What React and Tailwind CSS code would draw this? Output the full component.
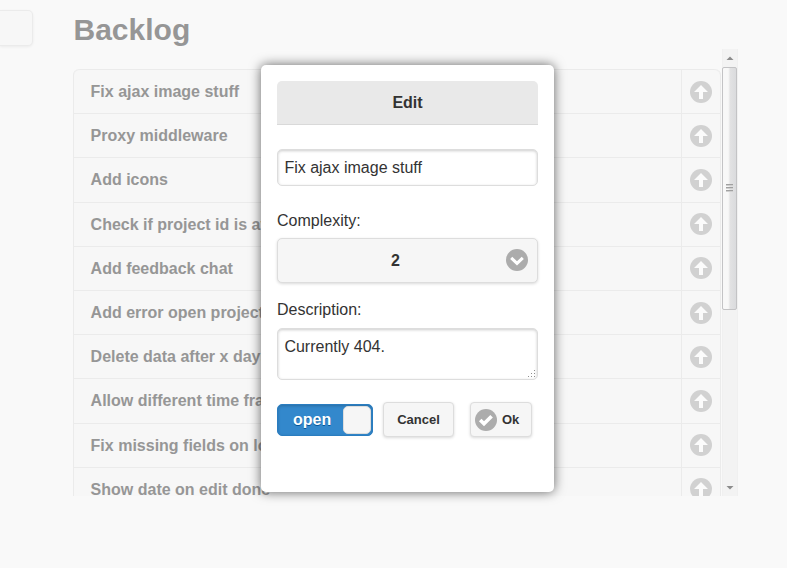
import React from "react";

const items = [
  "Fix ajax image stuff",
  "Proxy middleware",
  "Add icons",
  "Check if project id is available",
  "Add feedback chat",
  "Add error open project",
  "Delete data after x days",
  "Allow different time frames",
  "Fix missing fields on load",
  "Show date on edit done",
];

function UpIcon() {
  return (
    <svg width="22" height="22" viewBox="0 0 22 22" className="block">
      <circle cx="11" cy="11" r="11" fill="#d1d1d1" />
      <path d="M11 4 L18 11 H13 V18 H9 V11 H4 Z" fill="#fbfbfb" />
    </svg>
  );
}

function Row({ label, first }) {
  return (
    <li
      className={
        "flex h-[44.2px] shrink-0 border-t border-[#ebebeb] " +
        (first ? "rounded-t-md" : "")
      }
    >
      <div className="w-[607px] truncate pl-[16.6px] pt-[10px] text-[16px] leading-6 font-bold text-[#969696]">
        {label}
      </div>
      <div className="w-[39px] border-l border-[#ebebeb] pt-[10.6px] pl-[8px]">
        <UpIcon />
      </div>
    </li>
  );
}

function Scrollbar() {
  return (
    <div className="flex h-[447px] w-[16px] flex-col border-x border-[#f0f0f0] bg-[#f3f3f3]">
      <div className="flex h-[18px] items-center justify-center">
        <svg width="8" height="4" viewBox="0 0 8 4">
          <path d="M0.5 4 L4 0.5 L7.5 4 Z" fill="#8c8c8c" />
        </svg>
      </div>
      <div className="-ml-px flex h-[243px] w-[15px] items-center justify-center rounded-[2px] border border-[#c3c3c5] bg-linear-to-r from-[#f8f8f8] from-40% via-[#e2e2e3] via-55% to-[#dadbdd]">
        <svg width="7" height="9" viewBox="0 0 7 9" className="-mt-px -ml-px">
          <path d="M0 0H7V1H0ZM0 3H7V4H0ZM0 6H7V7H0Z" fill="#a0a0a0" />
          <path d="M0 1H7V2H0ZM0 4H7V5H0ZM0 7H7V8H0Z" fill="#cfcfcf" />
        </svg>
      </div>
      <div className="mt-auto flex h-[16px] items-center justify-center">
        <svg width="8" height="4" viewBox="0 0 8 4">
          <path d="M0.5 0 L4 3.5 L7.5 0 Z" fill="#8c8c8c" />
        </svg>
      </div>
    </div>
  );
}

function EditPopup() {
  return (
    <div className="absolute top-[65px] left-[261px] h-[427px] w-[293px] rounded-[5px] bg-white px-4 pt-4 text-[16px] text-[#333] shadow-[0_0_12px_rgba(0,0,0,0.6)]">
      <div className="flex h-[44px] items-center justify-center rounded-t-[5px] border-b border-[#d9d9d9] bg-[#e9e9e9] font-bold">
        Edit
      </div>
      <div className="mt-6 flex h-[37px] items-center rounded-[5px] border border-[#ddd] pl-[6.4px] shadow-[inset_0_1px_3px_rgba(0,0,0,0.2)]">
        Fix ajax image stuff
      </div>
      <div className="mt-[23px] leading-6">Complexity:</div>
      <div className="mt-[5px] flex h-[45px] items-center rounded-[5px] border border-[#ddd] bg-[#f6f6f6] pr-[9px] shadow-[0_1px_3px_rgba(0,0,0,0.15)]">
        <div className="flex-1 pl-[7px] text-center font-bold">2</div>
        <svg width="22" height="22" viewBox="0 0 22 22" className="-mt-px">
          <circle cx="11" cy="11" r="11" fill="#acacac" />
          <path d="M5.2 8.8 L11 14.4 L16.8 8.8" fill="none" stroke="#fff" strokeWidth="3" />
        </svg>
      </div>
      <div className="mt-[15px] leading-6">Description:</div>
      <div className="mt-[6px] flex h-[52px] justify-between rounded-[5px] border border-[#ddd] pt-[7px] pr-[1px] pl-[6.4px] leading-[22px] shadow-[inset_0_1px_3px_rgba(0,0,0,0.2)]">
        <span>Currently 404.</span>
        <svg width="9" height="9" viewBox="0 0 9 9" className="mb-px self-end">
          <path
            d="M7 1h1v1h-1zM4 4h1v1h-1zM7 4h1v1h-1zM1 7h1v1h-1zM4 7h1v1h-1zM7 7h1v1h-1z"
            fill="#8f8f8f"
          />
        </svg>
      </div>
      <div className="mt-[22px] flex items-start">
        <div className="mt-[2px] flex h-[32px] w-[96px] items-center justify-between rounded-[5px] border border-[#2a7dc0] bg-[#3388cc] pr-px pl-[15px] shadow-[inset_0_1px_3px_rgba(0,0,0,0.2)]">
          <span className="leading-6 font-bold text-white [text-shadow:0_1px_0_#005599]">
            open
          </span>
          <span className="h-[28px] w-[28px] rounded-[5px] border border-[#ddd] bg-[#f6f6f6]" />
        </div>
        <div className="ml-[10px] flex h-[35px] w-[71px] items-center justify-center rounded-[4px] border border-[#ddd] bg-[#f6f6f6] text-[13px] font-bold shadow-[0_1px_3px_rgba(0,0,0,0.15)]">
          Cancel
        </div>
        <div className="ml-[16px] flex h-[35px] w-[62px] items-center rounded-[4px] border border-[#ddd] bg-[#f6f6f6] pl-1 text-[13px] font-bold shadow-[0_1px_3px_rgba(0,0,0,0.15)]">
          <svg width="22" height="22" viewBox="0 0 22 22" className="mr-[5px]">
            <circle cx="11" cy="11" r="11" fill="#acacac" />
            <path d="M5.2 11 L9 14.8 L16.6 7.2" fill="none" stroke="#fff" strokeWidth="3.6" />
          </svg>
          Ok
        </div>
      </div>
    </div>
  );
}

export default function App() {
  return (
    <div className="relative h-[568px] w-[787px] overflow-hidden bg-[#f9f9f9] font-['Liberation_Sans',Arial,sans-serif]">
      <div className="flex items-start">
        <div className="mt-[10px] h-[36px] w-[33px] rounded-r-[5px] border border-l-0 border-[#ebebeb] bg-[#f7f7f7] shadow-[0_1px_3px_rgba(0,0,0,0.06)]" />
        <main className="ml-[40px] w-[665px]">
          <h1 className="h-[49px] pt-[12px] pl-[0.5px] text-[30px] leading-[36px] font-bold text-[#969696]">
            Backlog
          </h1>
          <div className="flex h-[447px] overflow-hidden">
            <ul className="mt-5 h-[460px] w-[648px] rounded-t-md border-x border-[#ebebeb] bg-[#f7f7f7]">
              {items.map((label, i) => (
                <Row key={label} label={label} first={i === 0} />
              ))}
            </ul>
            <div className="ml-px">
              <Scrollbar />
            </div>
          </div>
        </main>
      </div>
      <EditPopup />
    </div>
  );
}
